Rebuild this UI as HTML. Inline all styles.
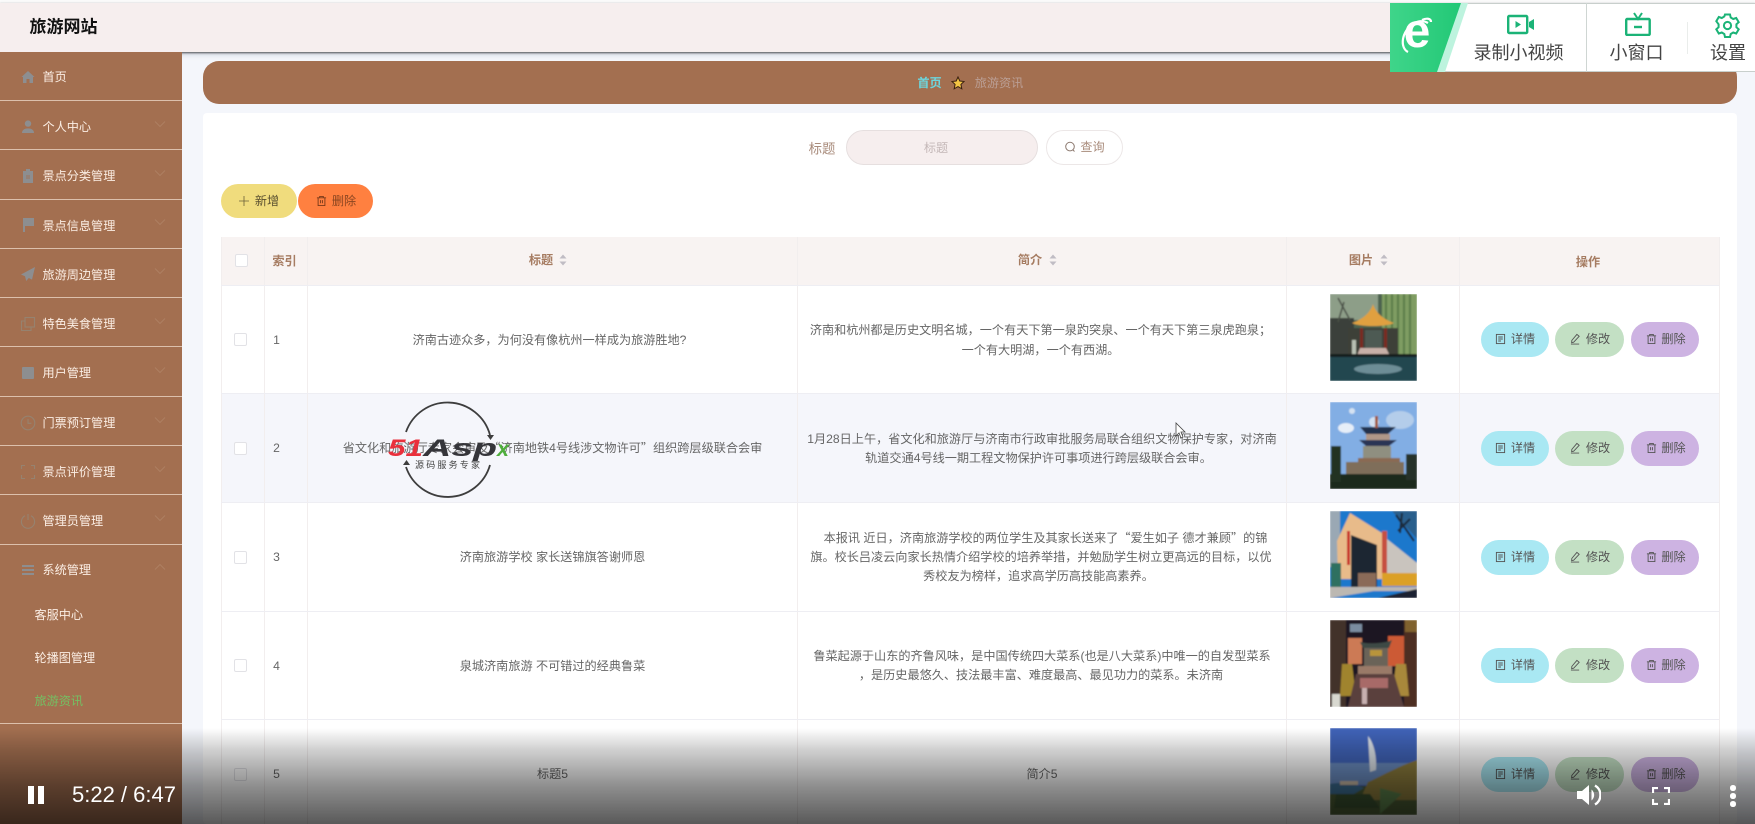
<!DOCTYPE html>
<html lang="zh"><head><meta charset="utf-8"><title>旅游网站</title>
<style>
html,body{margin:0;padding:0;background:#f4f6fb}
body{position:relative;width:1755px;height:824px;overflow:hidden;font-family:"Liberation Sans","Noto Sans CJK SC",sans-serif;font-size:12.15px;color:#666;filter:blur(.35px)}
div,span,svg{position:absolute;box-sizing:border-box}
.q{position:static;font-family:"Noto Sans CJK SC",sans-serif}
.c{transform:translate(-50%,-50%);white-space:nowrap;line-height:1}
.l{transform:translateY(-50%);white-space:nowrap;line-height:1}
.side{color:#fbeee4}
.ln{left:0;width:182px;height:1px;background:#dcc0ac}
.ic{left:20px;width:16px;height:16px;fill:#8d8e90;stroke:none}
.ico{left:20px;width:16px;height:16px;fill:none;stroke:#96826f;stroke-width:1.1}
.ch{left:153px;width:14px;height:8px;fill:none;stroke:#ad7f62;stroke-width:1}
.vl{width:1px;background:#f2eeee}
.hl{left:221px;width:1498px;height:1px;background:#eeeef3}
.pill{height:35px;border-radius:18px}
.blue{background:#a9e8f3;width:68px;left:1481px}
.green{background:#c3e0c4;width:69px;left:1555px}
.purple{background:#cdb3e2;width:68px;left:1631px}
.bt{color:#555;fill:none;stroke:#555;stroke-width:1}
.cb{left:234px;width:13px;height:13px;border:1px solid #e2e2e6;background:#fff;border-radius:2px}
.th{color:#a67c62;font-weight:700}
.tb{color:#666}
.im{left:1330px;width:87px;height:87px}
.ct{color:#444;font-size:18px}
</style></head><body>

<svg width="0" height="0" style="position:absolute">
<defs>
<symbol id="doc" viewBox="0 0 12 12"><rect x="1.5" y="1" width="9" height="10" fill="none"/><path d="M3.5 3.8h5M3.5 6h5M3.5 8.2h3" fill="none"/></symbol>
<symbol id="pen" viewBox="0 0 12 12"><path d="M7.5 1 10 3 4 9.5 1.8 10 2 7.5zM1 11.500h9" fill="none"/></symbol>
<symbol id="trash" viewBox="0 0 12 12"><path d="M1 2.500h10M4 2.500V1h4v1.500M2.300 2.500V11h7.400V2.500M5 5v3.500M7 5v3.500" fill="none"/></symbol>
<symbol id="sort" viewBox="0 0 8 12"><path d="M4 .5 7.500 4.500H.5zM4 11.500.5 7.500h7z" fill="#c0bcc4" stroke="none"/></symbol>
</defs>
</svg>

<!-- main bg -->
<div style="left:182px;top:52px;width:1573px;height:772px;background:#f4f6fb"></div>

<!-- header -->
<div style="left:0;top:0;width:1755px;height:3px;background:#fbfbfb"></div>
<div style="left:0;top:3px;width:1755px;height:49px;background:#f6eeee;box-shadow:0 1px 2px rgba(0,0,0,.65),0 3px 5px rgba(120,130,160,.25)"></div>
<div class="l" style="left:29.5px;top:27px;font-size:17px;font-weight:700;color:#111">旅游网站</div>

<!-- sidebar -->
<div style="left:0;top:52px;width:182px;height:772px;background:#a36f50"></div>
<div class="ln" style="top:100px"></div><div class="ln" style="top:149px"></div><div class="ln" style="top:199px"></div><div class="ln" style="top:248px"></div><div class="ln" style="top:297px"></div><div class="ln" style="top:346px"></div><div class="ln" style="top:396px"></div><div class="ln" style="top:445px"></div><div class="ln" style="top:494px"></div><div class="ln" style="top:544px"></div><div class="ln" style="top:723px"></div>

<div class="l side" style="left:42.5px;top:77px">首页</div>
<div class="l side" style="left:42.5px;top:127px">个人中心</div>
<div class="l side" style="left:42.5px;top:176px">景点分类管理</div>
<div class="l side" style="left:42.5px;top:226px">景点信息管理</div>
<div class="l side" style="left:42.5px;top:275px">旅游周边管理</div>
<div class="l side" style="left:42.5px;top:324px">特色美食管理</div>
<div class="l side" style="left:42.5px;top:373px">用户管理</div>
<div class="l side" style="left:42.5px;top:423px">门票预订管理</div>
<div class="l side" style="left:42.5px;top:472px">景点评价管理</div>
<div class="l side" style="left:42.5px;top:521px">管理员管理</div>
<div class="l side" style="left:42.5px;top:570px">系统管理</div>
<div class="l side" style="left:34.5px;top:615px">客服中心</div>
<div class="l side" style="left:34.5px;top:658px">轮播图管理</div>
<div class="l" style="left:34.5px;top:701px;color:#74c063">旅游资讯</div>

<svg class="ic" style="top:69px" viewBox="0 0 16 16"><path d="M8 2 1.500 8H3v6h3.500v-4h3v4H13V8h1.500z"/></svg>
<svg class="ic" style="top:119px" viewBox="0 0 16 16"><circle cx="8" cy="4.600" r="3.200"/><path d="M2 14c0-3.200 2.800-4.600 6-4.600s6 1.400 6 4.600z"/></svg>
<svg class="ic" style="top:168px" viewBox="0 0 16 16"><path d="M3 3h3V1h4v2h3v12H3z"/><rect x="6" y="7" width="4" height="4" fill="#a36f50" opacity=".4"/></svg>
<svg class="ic" style="top:217px" viewBox="0 0 16 16"><path d="M3 1h11v8H5v6H3z"/></svg>
<svg class="ic" style="top:266px" viewBox="0 0 16 16"><path d="M15 1 1 8.500l4 1.800 1.200 4.700 2.600-3 3.200 1.600z"/></svg>
<svg class="ico" style="top:316px" viewBox="0 0 16 16"><rect x="5" y="1.500" width="9.500" height="9.500"/><path d="M5 5H1.500v9.500H11V11"/></svg>
<svg class="ic" style="top:365px" viewBox="0 0 16 16"><rect x="2" y="2" width="12" height="12" rx="1"/></svg>
<svg class="ico" style="top:415px" viewBox="0 0 16 16"><circle cx="8" cy="8" r="6.800"/><path d="M8 4v4.300h3.400"/></svg>
<svg class="ico" style="top:464px" viewBox="0 0 16 16"><path d="M1.500 5V1.500H5M11 1.500h3.500V5M14.500 11v3.500H11M5 14.500H1.500V11"/></svg>
<svg class="ico" style="top:513px" viewBox="0 0 16 16"><path d="M5 2.800a6.600 6.600 0 1 0 6 0M8 1v6"/></svg>
<svg class="ic" style="top:562px" viewBox="0 0 16 16"><rect x="2" y="3" width="12" height="2"/><rect x="2" y="7" width="12" height="2"/><rect x="2" y="11" width="12" height="2"/></svg>

<svg class="ch" style="top:120px" viewBox="0 0 14 8"><path d="M2 1.500 7 6.500 12 1.500"/></svg>
<svg class="ch" style="top:169px" viewBox="0 0 14 8"><path d="M2 1.500 7 6.500 12 1.500"/></svg>
<svg class="ch" style="top:218px" viewBox="0 0 14 8"><path d="M2 1.500 7 6.500 12 1.500"/></svg>
<svg class="ch" style="top:267px" viewBox="0 0 14 8"><path d="M2 1.500 7 6.500 12 1.500"/></svg>
<svg class="ch" style="top:317px" viewBox="0 0 14 8"><path d="M2 1.500 7 6.500 12 1.500"/></svg>
<svg class="ch" style="top:366px" viewBox="0 0 14 8"><path d="M2 1.500 7 6.500 12 1.500"/></svg>
<svg class="ch" style="top:416px" viewBox="0 0 14 8"><path d="M2 1.500 7 6.500 12 1.500"/></svg>
<svg class="ch" style="top:465px" viewBox="0 0 14 8"><path d="M2 1.500 7 6.500 12 1.500"/></svg>
<svg class="ch" style="top:514px" viewBox="0 0 14 8"><path d="M2 1.500 7 6.500 12 1.500"/></svg>
<svg class="ch" style="top:563px" viewBox="0 0 14 8"><path d="M2 6.500 7 1.500 12 6.500"/></svg>

<!-- breadcrumb -->
<div style="left:203px;top:61px;width:1534px;height:43px;background:#a36f50;border-radius:16px"></div>
<div class="c" style="left:929.5px;top:83px;color:#6dd5dc;font-weight:700">首页</div>
<svg style="left:951px;top:76px;width:14px;height:14px" viewBox="0 0 14 14"><path d="M7 1 8.800 5 13 5.500 9.900 8.400 10.800 12.800 7 10.600 3.200 12.800 4.100 8.400 1 5.500 5.200 5z" fill="#f4c544" stroke="#3a2010" stroke-width="1"/></svg>
<div class="c" style="left:999px;top:83px;color:#bb9f95">旅游资讯</div>

<!-- card -->
<div style="left:203px;top:113px;width:1534px;height:711px;background:#fff;border-radius:4px"></div>

<!-- search -->
<div class="c" style="left:822px;top:149px;color:#a98c7c;font-size:13.4px">标题</div>
<div style="left:846px;top:130px;width:192px;height:35px;background:#f6eeee;border:1px solid #e6dfdf;border-radius:18px"></div>
<div class="c" style="left:936px;top:148px;color:#c4b8b8">标题</div>
<div style="left:1046px;top:130px;width:77px;height:35px;background:#fff;border:1px solid #ece7e7;border-radius:18px"></div>
<svg style="left:1064px;top:141px;width:12px;height:12px" viewBox="0 0 12 12"><circle cx="6" cy="5.600" r="4.300" fill="none" stroke="#8d7a70"/><path d="M9 9 10.500 10.500" stroke="#8d7a70"/></svg>
<div class="c" style="left:1092.5px;top:147px;color:#a98c7c">查询</div>

<!-- add / delete -->
<div style="left:221px;top:184px;width:76px;height:34px;background:#f0dc7d;border-radius:17px"></div>
<svg style="left:239px;top:196px;width:10px;height:10px" viewBox="0 0 10 10"><path d="M5 0v10M0 5h10" stroke="#6a6038" stroke-width=".8" fill="none"/></svg>
<div class="c" style="left:267px;top:201px;color:#5a5030">新增</div>
<div style="left:298px;top:184px;width:75px;height:34px;background:#ff8040;border-radius:17px"></div>
<svg class="bt" style="left:316px;top:195px;width:11px;height:12px;stroke:#7a3a1a"><use href="#trash"/></svg>
<div class="c" style="left:344px;top:201px;color:#8a4520">删除</div>

<!-- table -->
<div style="left:221px;top:237px;width:1498px;height:48px;background:#f8f3f2"></div>
<div style="left:221px;top:393px;width:1498px;height:109px;background:#f5f6fb"></div>
<div class="vl" style="left:221px;top:237px;height:587px"></div>
<div class="vl" style="left:264px;top:237px;height:587px"></div>
<div class="vl" style="left:307px;top:237px;height:587px"></div>
<div class="vl" style="left:797px;top:237px;height:587px"></div>
<div class="vl" style="left:1286px;top:237px;height:587px"></div>
<div class="vl" style="left:1459px;top:237px;height:587px"></div>
<div class="vl" style="left:1719px;top:237px;height:587px"></div>
<div class="hl" style="top:285px"></div><div class="hl" style="top:393px"></div><div class="hl" style="top:502px"></div><div class="hl" style="top:611px"></div><div class="hl" style="top:719px"></div>

<div class="cb" style="left:235px;top:254px"></div>
<div class="c th" style="left:284.5px;top:261px">索引</div>
<div class="c th" style="left:541px;top:260px">标题</div><svg style="left:559px;top:254px;width:8px;height:12px"><use href="#sort"/></svg>
<div class="c th" style="left:1030px;top:260px">简介</div><svg style="left:1049px;top:254px;width:8px;height:12px"><use href="#sort"/></svg>
<div class="c th" style="left:1361px;top:260px">图片</div><svg style="left:1380px;top:254px;width:8px;height:12px"><use href="#sort"/></svg>
<div class="c th" style="left:1588px;top:262px">操作</div>

<!-- rows: checkbox + index -->
<div class="cb" style="top:333px"></div><div class="c" style="left:276.5px;top:340px">1</div>
<div class="cb" style="top:442px"></div><div class="c" style="left:276.5px;top:448px">2</div>
<div class="cb" style="top:551px"></div><div class="c" style="left:276.5px;top:557px">3</div>
<div class="cb" style="top:659px"></div><div class="c" style="left:276.5px;top:666px">4</div>
<div class="cb" style="top:768px"></div><div class="c" style="left:276.5px;top:774px">5</div>

<!-- titles -->
<div class="c tb" style="left:549.5px;top:340px">济南古迹众多，为何没有像杭州一样成为旅游胜地?</div>
<div class="c tb" style="left:552.5px;top:448px">省文化和旅游厅专家会审及<span class="q">“</span>济南地铁4号线涉文物许可<span class="q">”</span>组织跨层级联合会审</div>
<div class="c tb" style="left:552.5px;top:557px">济南旅游学校 家长送锦旗答谢师恩</div>
<div class="c tb" style="left:552.5px;top:666px">泉城济南旅游 不可错过的经典鲁菜</div>
<div class="c tb" style="left:552.5px;top:774px">标题5</div>

<!-- descriptions -->
<div class="c tb" style="left:1040.5px;top:330px">济南和杭州都是历史文明名城，一个有天下第一泉趵突泉、一个有天下第三泉虎跑泉；</div>
<div class="c tb" style="left:1040.5px;top:350px">一个有大明湖，一个有西湖。</div>
<div class="c tb" style="left:1042px;top:439px">1月28日上午，省文化和旅游厅与济南市行政审批服务局联合组织文物保护专家，对济南</div>
<div class="c tb" style="left:1038.5px;top:458px">轨道交通4号线一期工程文物保护许可事项进行跨层级联合会审。</div>
<div class="c tb" style="left:1045.5px;top:538px">本报讯 近日，济南旅游学校的两位学生及其家长送来了<span class="q">“</span>爱生如子 德才兼顾<span class="q">”</span>的锦</div>
<div class="c tb" style="left:1041px;top:557px">旗。校长吕凌云向家长热情介绍学校的培养举措，并勉励学生树立更高远的目标，以优</div>
<div class="c tb" style="left:1038.5px;top:576px">秀校友为榜样，追求高学历高技能高素养。</div>
<div class="c tb" style="left:1042px;top:656px">鲁菜起源于山东的齐鲁风味，是中国传统四大菜系(也是八大菜系)中唯一的自发型菜系</div>
<div class="c tb" style="left:1041px;top:675px">，是历史最悠久、技法最丰富、难度最高、最见功力的菜系。未济南</div>
<div class="c tb" style="left:1042px;top:774px">简介5</div>

<!-- images -->
<svg class="im" style="top:294px" viewBox="0 0 87 87"><defs><filter id="b" x="0" y="0" width="100%" height="100%"><feGaussianBlur stdDeviation=".8"/></filter></defs><g filter="url(#b)"><rect width="87" height="87" fill="#4e6450"/><rect width="48" height="26" fill="#8d9e88"/><rect x="52" width="35" height="62" fill="#7f9c62"/><path d="M56 0v60M62 0v60M68 0v60M74 0v60M80 0v60" stroke="#5c7c48" stroke-width="2"/><rect x="0" y="24" width="24" height="36" fill="#3a403a"/><path d="M8 4 20 26M14 8l-6 20" stroke="#4a5046" stroke-width="1.500"/><rect x="18" y="34" width="50" height="28" fill="#3d3f39"/><path d="M43 10c3 10 12 16 21 19-8 4-34 4-42 0 9-3 18-9 21-19z" fill="#e0a040"/><rect x="30" y="34" width="3" height="24" fill="#7a2c24"/><rect x="54" y="34" width="3" height="24" fill="#7a2c24"/><rect x="35" y="36" width="17" height="20" fill="#4d5a52"/><path d="M30 54h26l5 10H26z" fill="#c8b0a8"/><rect x="22" y="46" width="4" height="16" fill="#b8c0b2"/><rect y="62" width="87" height="25" fill="#24464f"/><ellipse cx="48" cy="75" rx="24" ry="5" fill="#6d8d96"/><rect y="60" width="87" height="3" fill="#141e1c"/></g></svg>
<svg class="im" style="top:402px" viewBox="0 0 87 87"><g filter="url(#b)"><rect width="87" height="87" fill="#82aee4"/><ellipse cx="16" cy="26" rx="8" ry="5" fill="#e6eef8"/><ellipse cx="70" cy="18" rx="14" ry="9" fill="#b4cdea"/><ellipse cx="44" cy="20" rx="5" ry="5" fill="#d4e2f2"/><ellipse cx="22" cy="9" rx="3" ry="3" fill="#d4e2f2"/><path d="M30 25h36l-8 7H36z" fill="#24304e"/><rect x="36" y="32" width="24" height="6" fill="#b09888"/><path d="M29 38h38l-8 6H36z" fill="#2a3654"/><rect x="33" y="44" width="28" height="14" fill="#8f8f80"/><rect x="45" y="14" width="3" height="12" fill="#a05a40"/><rect x="28" y="56" width="42" height="6" fill="#8a6a52"/><rect x="16" y="60" width="58" height="13" fill="#7f6e5a"/><rect y="72" width="87" height="15" fill="#1e2a1c"/><rect y="44" x="1" width="10" height="36" fill="#243020"/><rect y="52" x="76" width="11" height="26" fill="#25322a"/></g></svg>
<svg class="im" style="top:511px" viewBox="0 0 87 87"><g filter="url(#b)"><rect width="87" height="87" fill="#1c78cc"/><path d="M0 0h10v56H0z" fill="#9aa8b4"/><path d="M62 0 87 28V0z" fill="#2c5f8c"/><path d="M66 4 84 30M72 2 70 22M80 8 68 20" stroke="#1a2a3a" stroke-width="2"/><path d="M7 30 20 2 52 22v46H8z" fill="#e8bb8a"/><path d="M21 24 47 34v42H21z" fill="#1f2730"/><rect x="17" y="20" width="3" height="34" fill="#c8342c"/><path d="M52 24 87 52v20H52z" fill="#c9c4be"/><rect x="52" y="20" width="5" height="42" fill="#c65040"/><rect x="52" y="62" width="35" height="13" fill="#dba028"/><rect x="1" y="52" width="10" height="24" fill="#2e7060"/><rect x="28" y="62" width="18" height="14" fill="#8a6a58"/><path d="M0 76h87v4H44L0 87z" fill="#bcb8b2"/><path d="M48 87 87 78v9z" fill="#1a2430"/></g></svg>
<svg class="im" style="top:620px" viewBox="0 0 87 87"><g filter="url(#b)"><rect width="87" height="87" fill="#1c1824"/><rect width="16" height="87" fill="#42302a"/><rect x="74" width="13" height="87" fill="#4e2e20"/><rect x="75" y="0" width="12" height="12" fill="#80622e"/><rect x="18" y="18" width="14" height="26" fill="#cc7a54"/><rect x="58" y="16" width="16" height="30" fill="#cc5a34"/><path d="M34 26h24v20H34z" fill="#6a6458"/><rect x="40" y="30" width="12" height="6" fill="#b8943a"/><path d="M30 22c6 2 24 2 32-2l-3 8H33z" fill="#3c4a44"/><rect x="28" y="46" width="34" height="8" fill="#9a7a68"/><path d="M12 44h10l4 32H10z" fill="#a0842e"/><path d="M66 44h10l3 32H62z" fill="#a8883a"/><path d="M26 54h38l10 33H18z" fill="#5a403c"/><rect x="30" y="58" width="28" height="10" fill="#a86a68"/><rect x="32" y="68" width="5" height="16" fill="#c8b0b0"/><rect x="2" y="74" width="8" height="13" fill="#d8d8d0"/><rect x="20" y="4" width="12" height="8" fill="#7a8ca0"/></g></svg>
<svg class="im" style="top:728px" viewBox="0 0 87 87"><g filter="url(#b)"><rect width="87" height="87" fill="#3f63b8"/><rect y="35" width="87" height="22" fill="#6b8cc0"/><path d="M38 8c5 6 9 18 8 34l-6 2z" fill="#dbe2e8"/><path d="M0 58h87v29H0z" fill="#4a5a30"/><path d="M38 54c10-4 26-14 49-22v40H30z" fill="#8a7a3a"/><path d="M0 56c12-2 22-1 34 4l-10 6H0z" fill="#3a6c90"/><path d="M6 66h34l10 14H4z" fill="#37502e"/><rect x="10" y="53" width="18" height="4" fill="#c8b8a4"/><path d="M50 60l22 6-22 20z" fill="#5a7f4a"/></g></svg>

<!-- op buttons -->
<div class="pill blue" style="top:322px"></div><div class="pill green" style="top:322px"></div><div class="pill purple" style="top:322px"></div>
<div class="pill blue" style="top:431px"></div><div class="pill green" style="top:431px"></div><div class="pill purple" style="top:431px"></div>
<div class="pill blue" style="top:540px"></div><div class="pill green" style="top:540px"></div><div class="pill purple" style="top:540px"></div>
<div class="pill blue" style="top:648px"></div><div class="pill green" style="top:648px"></div><div class="pill purple" style="top:648px"></div>
<div class="pill blue" style="top:757px"></div><div class="pill green" style="top:757px"></div><div class="pill purple" style="top:757px"></div>

<svg class="bt" style="left:1495px;top:333px;width:11px;height:12px"><use href="#doc"/></svg><div class="c" style="left:1523px;top:339px;color:#555">详情</div>
<svg class="bt" style="left:1570px;top:333px;width:11px;height:12px"><use href="#pen"/></svg><div class="c" style="left:1598px;top:339px;color:#555">修改</div>
<svg class="bt" style="left:1646px;top:333px;width:11px;height:12px"><use href="#trash"/></svg><div class="c" style="left:1673.5px;top:339px;color:#555">删除</div>

<svg class="bt" style="left:1495px;top:442px;width:11px;height:12px"><use href="#doc"/></svg><div class="c" style="left:1523px;top:448px;color:#555">详情</div>
<svg class="bt" style="left:1570px;top:442px;width:11px;height:12px"><use href="#pen"/></svg><div class="c" style="left:1598px;top:448px;color:#555">修改</div>
<svg class="bt" style="left:1646px;top:442px;width:11px;height:12px"><use href="#trash"/></svg><div class="c" style="left:1673.5px;top:448px;color:#555">删除</div>

<svg class="bt" style="left:1495px;top:551px;width:11px;height:12px"><use href="#doc"/></svg><div class="c" style="left:1523px;top:557px;color:#555">详情</div>
<svg class="bt" style="left:1570px;top:551px;width:11px;height:12px"><use href="#pen"/></svg><div class="c" style="left:1598px;top:557px;color:#555">修改</div>
<svg class="bt" style="left:1646px;top:551px;width:11px;height:12px"><use href="#trash"/></svg><div class="c" style="left:1673.5px;top:557px;color:#555">删除</div>

<svg class="bt" style="left:1495px;top:659px;width:11px;height:12px"><use href="#doc"/></svg><div class="c" style="left:1523px;top:665px;color:#555">详情</div>
<svg class="bt" style="left:1570px;top:659px;width:11px;height:12px"><use href="#pen"/></svg><div class="c" style="left:1598px;top:665px;color:#555">修改</div>
<svg class="bt" style="left:1646px;top:659px;width:11px;height:12px"><use href="#trash"/></svg><div class="c" style="left:1673.5px;top:665px;color:#555">删除</div>

<svg class="bt" style="left:1495px;top:768px;width:11px;height:12px"><use href="#doc"/></svg><div class="c" style="left:1523px;top:774px;color:#555">详情</div>
<svg class="bt" style="left:1570px;top:768px;width:11px;height:12px"><use href="#pen"/></svg><div class="c" style="left:1598px;top:774px;color:#555">修改</div>
<svg class="bt" style="left:1646px;top:768px;width:11px;height:12px"><use href="#trash"/></svg><div class="c" style="left:1673.5px;top:774px;color:#555">删除</div>

<!-- cursor -->
<svg style="left:1175px;top:422px;width:12px;height:17px" viewBox="0 0 12 17"><path d="M1 1v13l3-3 2 5 2-1-2-5h4z" fill="#fff" stroke="#444" stroke-width=".8"/></svg>

<!-- watermark -->
<svg style="left:380px;top:395px;width:135px;height:105px" viewBox="380 395 135 105">
<path d="M406 432A44 44 0 0 1 490 435M490 465A44 44 0 0 1 406 467" fill="none" stroke="#3d3d3d" stroke-width="1.800"/>
<path d="M487 435h7l-3.500 5zM403 465h7l-3.500-5z" fill="#3d3d3d"/>
<text x="388" y="456" font-family="Liberation Sans" font-size="24" font-weight="700" font-style="italic" fill="#e9303c" textLength="35" lengthAdjust="spacingAndGlyphs">51</text>
<text x="423" y="456" font-family="Liberation Sans" font-size="24" font-weight="700" font-style="italic" fill="#35353a" textLength="74" lengthAdjust="spacingAndGlyphs">Asp</text>
<text x="497" y="456" font-family="Liberation Sans" font-size="21" font-weight="700" font-style="italic" fill="#4fae3c" textLength="12" lengthAdjust="spacingAndGlyphs">x</text>
<text x="415" y="468" font-family="Liberation Sans,Noto Sans CJK SC,sans-serif" font-size="9" letter-spacing="2.200" fill="#444">源码服务专家</text>
</svg>

<!-- video gradient -->
<div style="left:0;top:728px;width:1755px;height:96px;background:linear-gradient(to bottom,rgba(0,0,0,0) 0%,rgba(0,0,0,.18) 22%,rgba(0,0,0,.44) 60%,rgba(0,0,0,.65) 100%)"></div>

<!-- video controls -->
<div style="left:28px;top:786px;width:6px;height:18px;background:#fff"></div>
<div style="left:38px;top:786px;width:6px;height:18px;background:#fff"></div>
<div class="l" style="left:72px;top:795px;font-size:22px;color:#fff;font-family:'Liberation Sans',sans-serif">5:22 / 6:47</div>
<svg style="left:1577px;top:783px;width:24px;height:24px" viewBox="0 0 24 24"><path d="M0 8h5l7-6v20l-7-6H0z" fill="#fff"/><path d="M14.500 6.500a7 7 0 0 1 0 11z" fill="#fff"/><path d="M18 2.500a11 11 0 0 1 0 19" fill="none" stroke="#fff" stroke-width="2.400"/></svg>
<svg style="left:1652px;top:787px;width:18px;height:18px" viewBox="0 0 18 18"><path d="M1 6V1h5M12 1h5v5M17 12v5h-5M6 17H1v-5" fill="none" stroke="#fff" stroke-width="2.200"/></svg>
<div style="left:1730px;top:785px;width:5.500px;height:5.500px;border-radius:50%;background:#fff"></div>
<div style="left:1730px;top:793px;width:5.500px;height:5.500px;border-radius:50%;background:#fff"></div>
<div style="left:1730px;top:801px;width:5.500px;height:5.500px;border-radius:50%;background:#fff"></div>

<!-- top-right browser overlay -->
<div style="left:1390px;top:3px;width:365px;height:69px;background:#fff;border-top:1px solid #c8cfcc;border-bottom:1px solid #c8cfcc"></div>
<svg style="left:1390px;top:3px;width:80px;height:69px" viewBox="0 0 80 69"><defs><linearGradient id="g" x1="0" y1="0" x2="1" y2="0"><stop offset="0" stop-color="#3fd58a"/><stop offset="1" stop-color="#22c876"/></linearGradient></defs><path d="M70 0h8L55 69h-9z" fill="#bdf3de"/><path d="M0 0h71L47 69H0z" fill="url(#g)"/></svg>
<div class="c" style="left:1417px;top:32px;font-size:48px;color:#fff;font-family:'Liberation Sans',sans-serif;font-weight:700">e</div>
<svg style="left:1400px;top:17px;width:34px;height:38px" viewBox="0 0 34 38"><path d="M28 6C18 0 5 10 3 22c-1 6 1 11 5 13" fill="none" stroke="#fff" stroke-width="2.200"/><path d="M22 3c4-2 9-2 9 2" fill="none" stroke="#fff" stroke-width="2.200"/></svg>

<div style="left:1586px;top:3px;width:1px;height:69px;background:#cfd6d3"></div>
<div style="left:1687px;top:22px;width:1px;height:32px;background:#eaedeb"></div>

<svg style="left:1507px;top:14px;width:28px;height:21px" viewBox="0 0 28 21"><rect x="1.200" y="2" width="19" height="17" rx="1" fill="none" stroke="#1bb377" stroke-width="2.400"/><path d="M8.500 7v7l5.500-3.500z" fill="#1bb377"/><path d="M22 8l5-3v11l-5-3z" fill="#1bb377"/></svg>
<div class="c ct" style="left:1518.5px;top:53px">录制小视频</div>
<svg style="left:1625px;top:12px;width:26px;height:24px" viewBox="0 0 26 24"><rect x="1.200" y="7" width="23.500" height="16" rx="1" fill="none" stroke="#1bb377" stroke-width="2.400"/><path d="M9 1l4 6 4-6" fill="none" stroke="#1bb377" stroke-width="2"/><path d="M9 15h8" stroke="#1bb377" stroke-width="2.400"/></svg>
<div class="c ct" style="left:1636.500px;top:53px">小窗口</div>
<svg style="left:1715px;top:13px;width:25px;height:25px" viewBox="0 0 25 25"><path d="M10 1.500h5l.7 3 2.500 1.500 3-1 2.500 4.200-2.300 2.100v2.900l2.300 2.100-2.500 4.200-3-1-2.500 1.500-.7 3h-5l-.7-3-2.500-1.500-3 1-2.500-4.200 2.300-2.100v-2.900L1.300 8.200 3.800 4l3 1 2.500-1.500z" fill="none" stroke="#1bb377" stroke-width="2"/><circle cx="12.500" cy="12.500" r="3.600" fill="none" stroke="#1bb377" stroke-width="2"/></svg>
<div class="c ct" style="left:1728px;top:53px">设置</div>

</body></html>
